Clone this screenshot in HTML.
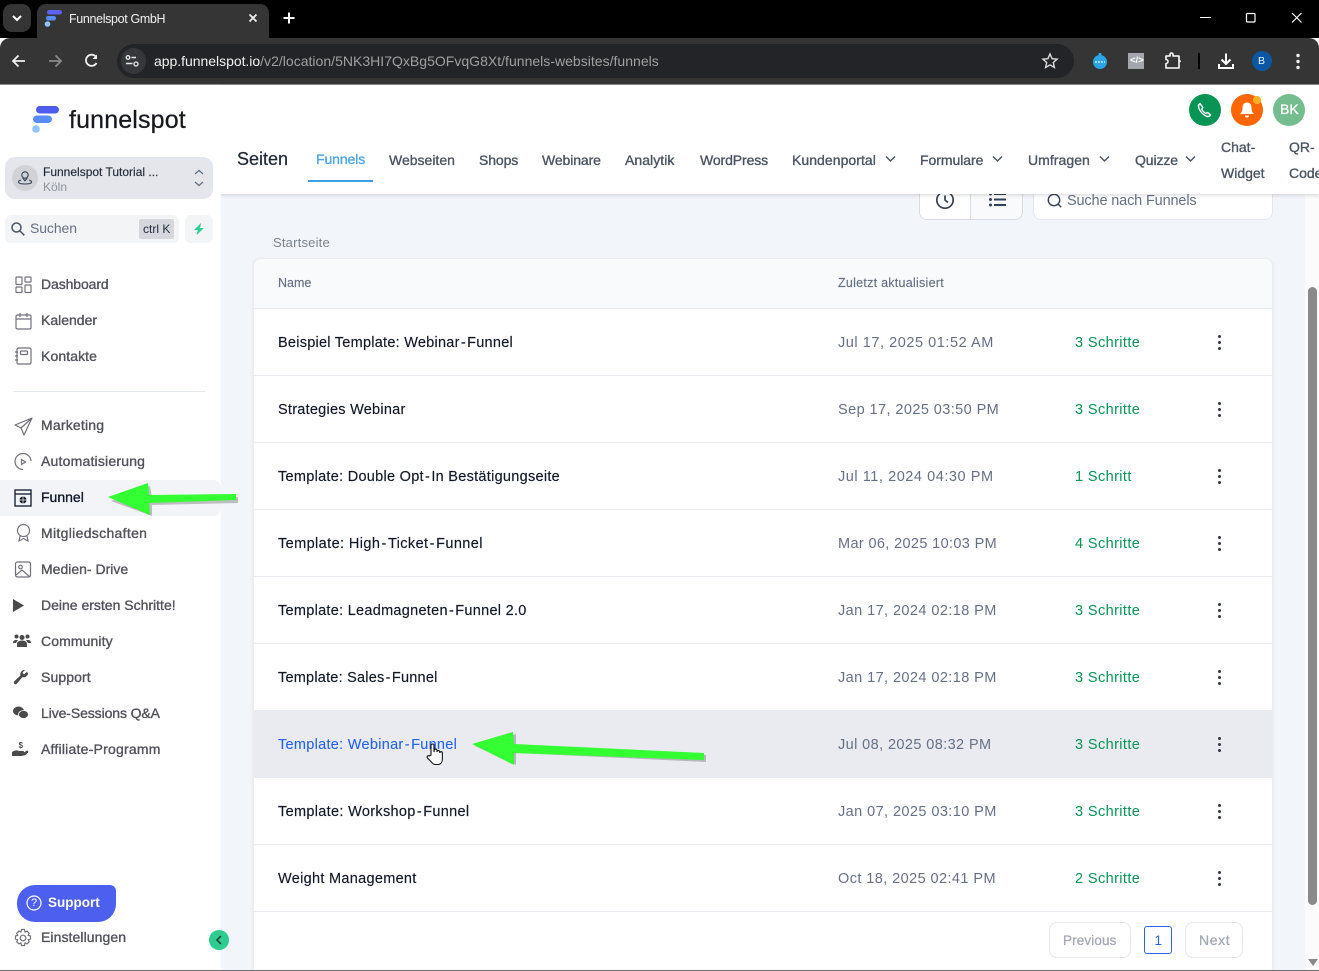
<!DOCTYPE html>
<html lang="de">
<head>
<meta charset="utf-8">
<title>Funnelspot GmbH</title>
<style>
html,body{margin:0;padding:0;width:1319px;height:971px;overflow:hidden;background:#fff;font-family:"Liberation Sans",sans-serif}
#r{position:relative;width:1319px;height:971px;overflow:hidden}
.a{position:absolute}
.t{position:absolute;white-space:nowrap;line-height:1}
svg{position:absolute;overflow:visible}
.nav{font-size:14px;color:#52525b;font-weight:500;-webkit-text-stroke:.35px #52525b}
.tab{font-size:14px;color:#4b5563;-webkit-text-stroke:.35px #4b5563}
.name{font-size:14.5px;color:#111827;left:278px;letter-spacing:.25px;-webkit-text-stroke:.15px #111827}
.h{margin:0 1.2px}
.date{font-size:14.5px;color:#667085;left:838px;letter-spacing:.42px}
.st{font-size:14.5px;color:#079455;left:1075px;letter-spacing:.4px}
.row{position:absolute;left:254px;width:1018px;height:66px;border-bottom:1px solid #e8eaee;background:#fff}
.dots{position:absolute;left:1218px;width:4px}
.dots i{display:block;width:3.4px;height:3.4px;border-radius:50%;background:#2f3747;margin-bottom:2.6px}
</style>
</head>
<body>
<div id="r">
<!-- Browser chrome -->
<div class="a" style="left:0;top:0;width:1319px;height:38px;background:#000"></div>
<div class="a" style="left:3px;top:4px;width:28px;height:28px;background:#353535;border-radius:9px"></div>
<svg style="left:0;top:0" width="40" height="38"><path d="M13 16l4 4 4-4" fill="none" stroke="#fff" stroke-width="2"/></svg>
<div class="a" style="left:37px;top:4px;width:232px;height:34px;background:#353535;border-radius:9px 9px 0 0"></div>
<div class="a" style="left:0;top:38px;width:1319px;height:46px;background:#353535;border-radius:10px 10px 0 0"></div>
<div class="a" style="left:0;top:84px;width:1319px;height:1px;background:#8a8a8a"></div>
<svg style="left:44px;top:9px" width="20" height="20"><rect x="3" y="1" width="15" height="4.5" rx="2.2" fill="#5b63f0"/><rect x="2" y="7" width="10" height="4.5" rx="2.2" fill="#5a8cf8"/><circle cx="3.5" cy="15" r="2.8" fill="#8ec5fb"/></svg>
<div class="t" style="left:69px;top:13px;font-size:12.5px;color:#f1f1f1;letter-spacing:-.35px">Funnelspot GmbH</div>
<svg style="left:245px;top:10px" width="16" height="16"><path d="M4.5 4.5l7 7M11.5 4.5l-7 7" stroke="#f1f1f1" stroke-width="1.7"/></svg>
<svg style="left:281px;top:10px" width="16" height="16"><path d="M8 2.5v11M2.5 8h11" stroke="#fff" stroke-width="2"/></svg>
<svg style="left:1198px;top:10px" width="112" height="16"><path d="M2 7.5h11" stroke="#fff" stroke-width="1"/><rect x="48.5" y="3.5" width="8.5" height="8.5" rx="1" fill="none" stroke="#fff" stroke-width="1.2"/><path d="M94 3l9.5 9.5M103.500 3L94 12.500" stroke="#fff" stroke-width="1.2"/></svg>
<svg style="left:10px;top:52px" width="95" height="18"><path d="M15 9H3M8.500 3.500L3 9l5.500 5.500" fill="none" stroke="#f1f1f1" stroke-width="1.800"/><path d="M39 9h12M45.500 3.500L51 9l-5.500 5.500" fill="none" stroke="#8a8a8a" stroke-width="1.800"/><path d="M86 4.800A5.600 5.600 0 1 0 86.500 11" fill="none" stroke="#f1f1f1" stroke-width="1.800"/><path d="M87 2.500v4.500h-4.500" fill="#f1f1f1"/></svg>
<div class="a" style="left:117px;top:44px;width:957px;height:34px;background:#232428;border-radius:17px"></div>
<div class="a" style="left:121px;top:48px;width:25px;height:26px;background:#36373a;border-radius:13px"></div>
<svg style="left:122px;top:52px" width="20" height="18"><path d="M9.500 5.500h4.500M4 11.500h6.500" stroke="#e8e8e8" stroke-width="1.400"/><circle cx="14" cy="12" r="2" fill="none" stroke="#e8e8e8" stroke-width="1.300"/><circle cx="6" cy="5.500" r="1.800" fill="none" stroke="#e8e8e8" stroke-width="1.300"/></svg>
<div class="t" style="left:154px;top:54px;font-size:14px;color:#f1f1f1;letter-spacing:-.03px">app.funnelspot.io<span style="color:#a0a0a0;letter-spacing:.017px">/v2/location/5NK3HI7QxBg5OFvqG8Xt/funnels-websites/funnels</span></div>
<svg style="left:1040px;top:51px" width="20" height="20"><path d="M10 3l2.100 4.700 5 .5-3.800 3.300 1.100 5L10 13.900l-4.400 2.600 1.100-5L2.900 8.200l5-.5z" fill="none" stroke="#dcdcdc" stroke-width="1.400"/></svg>
<svg style="left:1092px;top:52px" width="16" height="18"><circle cx="8" cy="10" r="7" fill="#2aa6e6"/><rect x="6.500" y="1" width="3" height="3" rx="1" fill="#2aa6e6"/><path d="M3 10h10" stroke="#dff3fc" stroke-width="1.200" stroke-dasharray="2 1"/></svg>
<div class="a" style="left:1128px;top:53px;width:16px;height:16px;background:#a2a6ad"></div>
<div class="t" style="left:1130px;top:56px;font-size:9.500px;color:#fff;font-weight:bold">&lt;/&gt;</div>
<svg style="left:1164px;top:52px" width="18" height="18"><path d="M2 4h4V2.500a1.500 1.500 0 0 1 3 0V4h6v5h1a2 2 0 0 1 0 0.500h-1V16H2v-4.500a2 2 0 0 0 0-4z" fill="none" stroke="#fff" stroke-width="1.600" stroke-linejoin="round"/></svg>
<div class="a" style="left:1198px;top:53px;width:2px;height:16px;background:#000"></div>
<svg style="left:1217px;top:52px" width="18" height="18"><path d="M9 1.500v10M4.500 7.500L9 12l4.500-4.500" fill="none" stroke="#fff" stroke-width="2"/><path d="M2 12v4h14v-4" fill="none" stroke="#fff" stroke-width="2"/></svg>
<div class="a" style="left:1252px;top:51px;width:20px;height:20px;background:#0b57a4;border-radius:50%"></div>
<div class="t" style="left:1258px;top:56px;font-size:10.500px;color:#e8f0fe">B</div>
<svg style="left:1294px;top:52px" width="8" height="18"><circle cx="4" cy="3.500" r="1.700" fill="#f1f1f1"/><circle cx="4" cy="9.500" r="1.700" fill="#f1f1f1"/><circle cx="4" cy="15.500" r="1.700" fill="#f1f1f1"/></svg>

<!-- Main background -->
<div class="a" style="left:221px;top:85px;width:1084px;height:885px;background:#f2f5f9"></div>
<div class="a" style="left:1305px;top:85px;width:14px;height:885px;background:#fbfbfb"></div>
<div class="a" style="left:1308px;top:287px;width:9px;height:618px;background:#8a8a8a;border-radius:5px"></div>
<svg style="left:1307px;top:958px" width="12" height="10"><path d="M1 1h10l-5 7z" fill="#8a8a8a"/></svg>

<!-- Toolbar (behind header) -->
<div class="a" style="left:919px;top:170px;width:104px;height:50px;background:#fff;border:1px solid #d9dde3;border-radius:8px;box-sizing:border-box;overflow:hidden"><div class="a" style="left:50px;top:0;width:53px;height:50px;background:#f9fafb;border-left:1px solid #d9dde3"></div></div>
<svg style="left:934px;top:189px" width="24" height="24"><circle cx="11" cy="11" r="8.200" fill="none" stroke="#344054" stroke-width="1.700"/><path d="M11 6.500V11l3 2.500" fill="none" stroke="#344054" stroke-width="1.700"/></svg>
<svg style="left:988px;top:192px" width="20" height="16"><path d="M6 2h12M6 7.500h12M6 13h12" stroke="#344054" stroke-width="2"/><circle cx="2.500" cy="2" r="1.500" fill="#344054"/><circle cx="2.500" cy="7.500" r="1.500" fill="#344054"/><circle cx="2.500" cy="13" r="1.500" fill="#344054"/></svg>
<div class="a" style="left:1033px;top:170px;width:240px;height:50px;background:#fff;border:1px solid #e4e7ec;border-radius:8px;box-sizing:border-box"></div>
<svg style="left:1047px;top:193px" width="16" height="16"><circle cx="7" cy="7" r="5.700" fill="none" stroke="#344054" stroke-width="1.400"/><path d="M11 11l3.200 3.200" stroke="#344054" stroke-width="1.400"/></svg>
<div class="t" style="left:1067px;top:194px;font-size:14.5px;color:#667085;letter-spacing:-.15px">Suche nach Funnels</div>

<!-- Header -->
<div class="a" style="left:221px;top:85px;width:1098px;height:109px;background:#fff;box-shadow:0 1px 4px rgba(16,24,40,.18)"></div>
<div class="a" style="left:1189px;top:94px;width:32px;height:32px;border-radius:50%;background:#079455"></div>
<svg style="left:1196px;top:101px" width="18" height="18"><path d="M4 2.500C2.500 3.500 2 5 3 7.500c1.300 3 4 6 7 7.500 2 1 3.500.5 4.500-1l-2.800-2.500-1.700 1C8 11.500 6.500 9.800 5.700 8l1.200-1.500z" fill="none" stroke="#fff" stroke-width="1.400" stroke-linejoin="round"/></svg>
<div class="a" style="left:1231px;top:94px;width:32px;height:32px;border-radius:50%;background:#ff6600"></div>
<svg style="left:1238px;top:101px" width="18" height="18"><path d="M9 1.500c-3 0-4.500 2.200-4.500 5 0 3.500-1 5-2.500 6.500h14c-1.500-1.500-2.500-3-2.500-6.500 0-2.800-1.500-5-4.500-5z" fill="#fff"/><path d="M7 14.500h4a2 2 0 0 1-4 0z" fill="#fff"/></svg>
<div class="a" style="left:1253px;top:96px;width:8px;height:8px;border-radius:50%;background:#fdb022"></div>
<div class="a" style="left:1273px;top:94px;width:32px;height:32px;border-radius:50%;background:#75bd8f"></div>
<div class="t" style="left:1280px;top:102px;font-size:14px;color:#fff;-webkit-text-stroke:.3px #fff">BK</div>

<div class="t" style="left:237px;top:150px;font-size:18px;color:#1f2937;-webkit-text-stroke:.25px #1f2937">Seiten</div>
<div class="t tab" style="left:316px;top:152px;color:#4ba3e3;-webkit-text-stroke:.3px #4ba3e3;letter-spacing:-.1px">Funnels</div>
<div class="a" style="left:308px;top:180px;width:65px;height:2px;background:#3b9fe0"></div>
<div class="t tab" style="left:389px;top:153px;letter-spacing:0">Webseiten</div>
<div class="t tab" style="left:479px;top:153px;letter-spacing:-.1px">Shops</div>
<div class="t tab" style="left:542px;top:153px;letter-spacing:-.1px">Webinare</div>
<div class="t tab" style="left:625px;top:153px;letter-spacing:.05px">Analytik</div>
<div class="t tab" style="left:700px;top:153px;letter-spacing:-.1px">WordPress</div>
<div class="t tab" style="left:792px;top:153px;letter-spacing:.05px">Kundenportal</div>
<div class="t tab" style="left:920px;top:153px;letter-spacing:-.05px">Formulare</div>
<div class="t tab" style="left:1028px;top:153px;letter-spacing:.05px">Umfragen</div>
<div class="t tab" style="left:1135px;top:153px;letter-spacing:-.1px">Quizze</div>
<svg style="left:880px;top:152px" width="320" height="16"><path d="M6 4.500l4.500 4.500L15 4.500M113 4.500l4.500 4.500 4.500-4.500M220 4.500l4.500 4.500 4.500-4.500M306 4.500l4.500 4.500 4.500-4.500" fill="none" stroke="#4b5563" stroke-width="1.500"/></svg>
<div class="t tab" style="left:1221px;top:140px">Chat-</div>
<div class="t tab" style="left:1221px;top:166px">Widget</div>
<div class="t tab" style="left:1289px;top:140px">QR-</div>
<div class="t tab" style="left:1289px;top:166px">Code</div>

<div class="t" style="left:273px;top:236px;font-size:13px;color:#7a828e;letter-spacing:.2px">Startseite</div>

<!-- Table -->
<div class="a" style="left:253px;top:258px;width:1020px;height:720px;background:#fff;border:1px solid #eaecf0;border-radius:8px;box-sizing:border-box;box-shadow:0 1px 3px rgba(16,24,40,.08)"></div>
<div class="a" style="left:254px;top:259px;width:1018px;height:49px;background:#f9fafb;border-bottom:1px solid #e8eaee;border-radius:8px 8px 0 0"></div>
<div class="t" style="left:278px;top:277px;font-size:12.500px;color:#667085;-webkit-text-stroke:.15px #667085">Name</div>
<div class="t" style="left:838px;top:277px;font-size:12.500px;color:#667085;letter-spacing:.26px;-webkit-text-stroke:.15px #667085">Zuletzt aktualisiert</div>

<div class="row" style="top:309px"></div>
<div class="row" style="top:376px"></div>
<div class="row" style="top:443px"></div>
<div class="row" style="top:510px"></div>
<div class="row" style="top:577px"></div>
<div class="row" style="top:644px"></div>
<div class="row" style="top:711px;background:#e9ebf0"></div>
<div class="row" style="top:778px"></div>
<div class="row" style="top:845px"></div>

<div class="t name" style="top:336px">Beispiel Template: Webinar<span class="h">-</span>Funnel</div>
<div class="t date" style="top:336px;letter-spacing:.55px">Jul 17, 2025 01:52 AM</div>
<div class="t st" style="top:336px">3 Schritte</div>
<div class="dots" style="top:335px"><i></i><i></i><i></i></div>

<div class="t name" style="top:403px">Strategies Webinar</div>
<div class="t date" style="top:403px">Sep 17, 2025 03:50 PM</div>
<div class="t st" style="top:403px">3 Schritte</div>
<div class="dots" style="top:402px"><i></i><i></i><i></i></div>

<div class="t name" style="top:470px;letter-spacing:.28px">Template: Double Opt<span class="h">-</span>In Bestätigungseite</div>
<div class="t date" style="top:470px;letter-spacing:.55px">Jul 11, 2024 04:30 PM</div>
<div class="t st" style="top:470px">1 Schritt</div>
<div class="dots" style="top:469px"><i></i><i></i><i></i></div>

<div class="t name" style="top:537px;letter-spacing:.4px">Template: High<span class="h">-</span>Ticket<span class="h">-</span>Funnel</div>
<div class="t date" style="top:537px;letter-spacing:.36px">Mar 06, 2025 10:03 PM</div>
<div class="t st" style="top:537px">4 Schritte</div>
<div class="dots" style="top:536px"><i></i><i></i><i></i></div>

<div class="t name" style="top:604px;letter-spacing:.28px">Template: Leadmagneten<span class="h">-</span>Funnel 2.0</div>
<div class="t date" style="top:604px">Jan 17, 2024 02:18 PM</div>
<div class="t st" style="top:604px">3 Schritte</div>
<div class="dots" style="top:603px"><i></i><i></i><i></i></div>

<div class="t name" style="top:671px;letter-spacing:.22px">Template: Sales<span class="h">-</span>Funnel</div>
<div class="t date" style="top:671px">Jan 17, 2024 02:18 PM</div>
<div class="t st" style="top:671px">3 Schritte</div>
<div class="dots" style="top:670px"><i></i><i></i><i></i></div>

<div class="t name" style="top:738px;color:#2563eb;-webkit-text-stroke:.1px #2563eb;letter-spacing:.29px">Template: Webinar<span class="h">-</span>Funnel</div>
<div class="t date" style="top:738px;letter-spacing:.4px">Jul 08, 2025 08:32 PM</div>
<div class="t st" style="top:738px">3 Schritte</div>
<div class="dots" style="top:737px"><i></i><i></i><i></i></div>

<div class="t name" style="top:805px;letter-spacing:.32px">Template: Workshop<span class="h">-</span>Funnel</div>
<div class="t date" style="top:805px">Jan 07, 2025 03:10 PM</div>
<div class="t st" style="top:805px">3 Schritte</div>
<div class="dots" style="top:804px"><i></i><i></i><i></i></div>

<div class="t name" style="top:872px;letter-spacing:.3px">Weight Management</div>
<div class="t date" style="top:872px">Oct 18, 2025 02:41 PM</div>
<div class="t st" style="top:872px">2 Schritte</div>
<div class="dots" style="top:871px"><i></i><i></i><i></i></div>

<!-- Pagination -->
<div class="a" style="left:1049px;top:922px;width:82px;height:36px;border:1px solid #e4e7ec;border-radius:8px;box-sizing:border-box;background:#fff"></div>
<div class="t" style="left:1063px;top:934px;font-size:13.500px;color:#a3a9b5;letter-spacing:.12px;-webkit-text-stroke:.3px #a3a9b5">Previous</div>
<div class="a" style="left:1144px;top:926px;width:28px;height:28px;border:1px solid #2563eb;border-radius:3px;box-sizing:border-box;background:#fff"></div>
<div class="t" style="left:1154.500px;top:934px;font-size:13.500px;color:#2563eb">1</div>
<div class="a" style="left:1185px;top:922px;width:58px;height:36px;border:1px solid #e4e7ec;border-radius:8px;box-sizing:border-box;background:#fff"></div>
<div class="t" style="left:1199px;top:933px;font-size:14px;color:#a3a9b5;letter-spacing:.6px;-webkit-text-stroke:.3px #a3a9b5">Next</div>

<!-- Sidebar -->
<div class="a" style="left:0;top:85px;width:221px;height:885px;background:#fff"></div>
<svg style="left:30px;top:104px" width="32" height="32"><rect x="6" y="2" width="23" height="7.500" rx="3.700" fill="#4f5cf0"/><rect x="3" y="11.500" width="19" height="7.500" rx="3.700" fill="#5a8cf8"/><circle cx="6" cy="25" r="3.800" fill="#8ec5fb"/></svg>
<div class="t" style="left:69px;top:108px;font-size:25px;color:#17191f;letter-spacing:.15px;-webkit-text-stroke:.25px #17191f">funnelspot</div>

<div class="a" style="left:5px;top:157px;width:208px;height:42px;background:#e4e6eb;border-radius:10px"></div>
<div class="a" style="left:12px;top:165px;width:26px;height:26px;background:#d0d2d6;border-radius:50%"></div>
<svg style="left:17px;top:169px" width="16" height="18"><circle cx="8" cy="6" r="3.200" fill="none" stroke="#344054" stroke-width="1.100"/><path d="M8 12l-2.300-3.300M8 12l2.300-3.300M4 11c-2 .6-3 1.500-2.500 2.500.6 1 3 1.500 6.500 1.500s5.900-.5 6.500-1.500c.5-1-.5-1.900-2.500-2.500" fill="none" stroke="#344054" stroke-width="1.100"/></svg>
<div class="t" style="left:43px;top:166px;font-size:12px;color:#1f2937;-webkit-text-stroke:.15px #1f2937">Funnelspot Tutorial ...</div>
<div class="t" style="left:43px;top:181px;font-size:12px;color:#8d939e">Köln</div>
<svg style="left:192px;top:168px" width="14" height="20"><path d="M3 6l4-3.500L11 6M3 14l4 3.500 4-3.500" fill="none" stroke="#667085" stroke-width="1.300"/></svg>

<div class="a" style="left:5px;top:215px;width:174px;height:28px;background:#f3f4f6;border-radius:6px"></div>
<svg style="left:10px;top:221px" width="16" height="16"><circle cx="6.500" cy="6.500" r="4.500" fill="none" stroke="#475467" stroke-width="1.500"/><path d="M10 10l4.300 4.300" stroke="#475467" stroke-width="1.500"/></svg>
<div class="t" style="left:30px;top:221px;font-size:14px;color:#667085;letter-spacing:-.1px">Suchen</div>
<div class="a" style="left:139px;top:219px;width:35px;height:20px;background:#d5d7dd;border-radius:2px"></div>
<div class="t" style="left:143px;top:223px;font-size:12px;color:#1f2937">ctrl K</div>
<div class="a" style="left:185px;top:215px;width:28px;height:28px;background:#f3f4f6;border-radius:6px"></div>
<svg style="left:192px;top:222px" width="14" height="14"><path d="M9 1L2 8h4l-1.500 5L12 6H8z" fill="#2ecc8f"/></svg>

<div class="t nav" style="left:41px;top:277px;letter-spacing:-.1px">Dashboard</div>
<svg style="left:14px;top:275px" width="20" height="20" fill="none" stroke="#71717a" stroke-width="1.200"><rect x="2" y="2" width="6" height="7.500" rx=".8"/><rect x="11" y="2" width="6" height="5" rx=".8"/><rect x="2" y="12" width="6" height="5.500" rx=".8"/><rect x="11" y="10" width="6" height="7.500" rx=".8"/></svg>
<div class="t nav" style="left:41px;top:313px">Kalender</div>
<svg style="left:14px;top:311px" width="20" height="20" fill="none" stroke="#71717a" stroke-width="1.200"><rect x="2" y="4" width="15" height="14" rx="1.500"/><path d="M2 8h15M6 2v4M13 2v4"/></svg>
<div class="t nav" style="left:41px;top:349px;letter-spacing:.1px">Kontakte</div>
<svg style="left:14px;top:346px" width="20" height="20" fill="none" stroke="#71717a" stroke-width="1.200"><rect x="3" y="2" width="14" height="16" rx="1.500"/><rect x="6.500" y="5" width="7" height="3.500" rx="1"/><path d="M1 6h3M1 10h3M1 14h3"/></svg>
<div class="a" style="left:13px;top:391px;width:192px;height:1px;background:#e4e7ec"></div>

<div class="t nav" style="left:41px;top:418px;letter-spacing:.2px">Marketing</div>
<svg style="left:14px;top:416px" width="20" height="20" fill="none" stroke="#71717a" stroke-width="1.200" stroke-linejoin="round"><path d="M18 2L1 9l6 3 3 7zM7 12L18 2"/></svg>
<div class="t nav" style="left:41px;top:454px;letter-spacing:.2px">Automatisierung</div>
<svg style="left:14px;top:452px" width="20" height="20" fill="none" stroke="#71717a" stroke-width="1.200"><path d="M17 9A8 8 0 1 0 9 17.500"/><path d="M7.500 7.500l4 2.500-4 2.500z"/></svg>
<div class="a" style="left:0;top:480px;width:221px;height:36px;background:#f2f4f7;border-radius:0 8px 8px 0"></div>
<div class="t nav" style="left:41px;top:490px;color:#101828;-webkit-text-stroke:.35px #101828">Funnel</div>
<svg style="left:14px;top:489px" width="18" height="18" fill="none" stroke="#101828" stroke-width="1.300"><rect x="1" y="1" width="16" height="16"/><path d="M1 5h16"/><circle cx="9" cy="11" r="3.500" fill="#101828" stroke="none"/><path d="M5.500 11h7M9 7.500v7" stroke="#fff" stroke-width=".7"/></svg>
<div class="t nav" style="left:41px;top:526px;letter-spacing:.32px">Mitgliedschaften</div>
<svg style="left:14px;top:523px" width="20" height="20" fill="none" stroke="#71717a" stroke-width="1.200"><circle cx="9.500" cy="7.500" r="6"/><path d="M6 13l-1 5 4.500-2.500L14 18l-1-5"/></svg>
<div class="t nav" style="left:41px;top:562px;letter-spacing:0">Medien- Drive</div>
<svg style="left:14px;top:560px" width="20" height="20" fill="none" stroke="#71717a" stroke-width="1.200"><rect x="1.500" y="2" width="15" height="15" rx="2"/><circle cx="6.500" cy="7" r="1.800"/><path d="M2 15l6-5 8 7"/></svg>
<div class="t nav" style="left:41px;top:598px;letter-spacing:0">Deine ersten Schritte!</div>
<svg style="left:13px;top:599px" width="12" height="13"><path d="M0 0l11 6.500L0 13z" fill="#4a4a4a"/></svg>
<div class="t nav" style="left:41px;top:634px;letter-spacing:.1px">Community</div>
<svg style="left:13px;top:633px" width="18" height="15" fill="#4a4a4a"><circle cx="3.500" cy="3.500" r="2"/><circle cx="14.500" cy="3.500" r="2"/><circle cx="9" cy="4.500" r="2.500"/><path d="M4 14v-3c0-2 2-3.500 5-3.500s5 1.500 5 3.500v3zM0 10c0-2 1-3 3-3h2L3 10zM18 10c0-2-1-3-3-3h-2l2 3z"/></svg>
<div class="t nav" style="left:41px;top:670px;letter-spacing:.1px">Support</div>
<svg style="left:13px;top:669px" width="16" height="16"><path d="M15 4c0 3-3 5-5.500 4L3.500 15c-1 1-3.500-.5-2.500-2.500L7.500 6.500C6.500 4 9 .5 12 1L9.500 3.500 11 5.500 13.500 3z" fill="#4a4a4a"/></svg>
<div class="t nav" style="left:41px;top:706px;letter-spacing:-.1px">Live-Sessions Q&amp;A</div>
<svg style="left:13px;top:706px" width="16" height="14" fill="#4a4a4a"><ellipse cx="5.500" cy="5" rx="5.500" ry="4.500"/><ellipse cx="10.500" cy="8.500" rx="5" ry="4" stroke="#fff" stroke-width=".8"/></svg>
<div class="t nav" style="left:41px;top:742px;letter-spacing:.22px">Affiliate-Programm</div>
<svg style="left:12px;top:740px" width="18" height="18" fill="#4a4a4a"><path d="M0 12c3-2 5-2 7-1h4c1.500 0 1.500 2 0 2H8c3 0 5-1 6-2 1.500-1 3 0 2 1.500C14 15 12 16 8 16H3l-3 0z"/><text x="6.500" y="8" font-size="8" font-family="Liberation Sans" font-weight="bold">$</text></svg>

<div class="a" style="left:17px;top:885px;width:99px;height:37px;background:#4c5fee;border-radius:18px 6px 18px 18px"></div>
<svg style="left:26px;top:895px" width="16" height="16"><circle cx="8" cy="8" r="7" fill="none" stroke="#fff" stroke-width="1.200"/></svg>
<div class="t" style="left:31px;top:898px;font-size:11px;color:#fff">?</div>
<div class="t" style="left:48px;top:896px;font-size:13.500px;color:#fff;font-weight:bold">Support</div>
<svg style="left:13px;top:928px" width="20" height="20" fill="none" stroke="#71717a" stroke-width="1.200"><circle cx="10" cy="10" r="2.800"/><path d="M8.500 1.500h3l.5 2.500 2-.9 2.200 2.200-1 2 2.300.7v3l-2.300.7 1 2-2.200 2.200-2-1-.5 2.600h-3l-.6-2.600-2 1-2.200-2.200 1-2-2.200-.7v-3l2.200-.7-1-2L5.900 3.100l2 .9z"/></svg>
<div class="t nav" style="left:41px;top:930px;letter-spacing:.08px">Einstellungen</div>
<div class="a" style="left:209px;top:930px;width:20px;height:20px;background:#2ecc8f;border-radius:50%"></div>
<svg style="left:209px;top:930px" width="20" height="20"><path d="M12 6l-4 4 4 4" fill="none" stroke="#1f3b36" stroke-width="1.500"/></svg>

<!-- Annotation arrows -->
<svg style="left:100px;top:478px" width="145" height="40"><path d="M9 21L48 6l2 12 86-1 0 6-86 2 0 11z" fill="#555" opacity=".35" transform="translate(2,2)"/><path d="M8 19L48 5l1 12 87-1 0 6-87 3 1 12z" fill="#33ff33"/></svg>
<svg style="left:465px;top:725px" width="250" height="45"><path d="M8 19L49 7l0 12 190 9 0 7-190-9 0 12z" fill="#555" opacity=".35" transform="translate(2,2)"/><path d="M7 19L48 7l1 12 190 9 0 7-190-7 0 12z" fill="#33ff33"/></svg>

<!-- Cursor -->
<svg style="left:424px;top:742px" width="22" height="26"><path d="M7 13V3.500a1.500 1.500 0 0 1 3 0V10l.2-1.500a1.400 1.400 0 0 1 2.800 0V10a1.400 1.400 0 0 1 2.800 0v1a1.300 1.300 0 0 1 2.600 0v6c0 3.500-2 5.500-5 5.500h-2c-2 0-3-1-4-2.500L3.500 16c-1-1.500.5-3 2-2z" fill="#fff" stroke="#111" stroke-width="1.100"/></svg>

<div class="a" style="left:0;top:970px;width:1319px;height:1px;background:#6e6e6e"></div>
</div>
</body>
</html>
